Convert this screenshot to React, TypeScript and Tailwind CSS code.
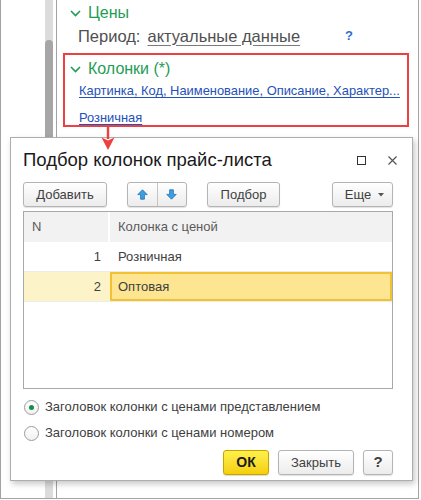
import type { ReactNode } from 'react';

function Chevron() {
  return (
    <svg width="11" height="7" viewBox="0 0 11 7" className="shrink-0">
      <path d="M1 1l4.5 4.5L10 1" fill="none" stroke="#1f9d55" strokeWidth="1.6" />
    </svg>
  );
}

function Btn({ className = '', children }: { className?: string; children: ReactNode }) {
  return (
    <button
      className={`flex h-[25px] shrink-0 items-center justify-center rounded-[3px] border border-[#b4b4b4] bg-linear-to-b from-white to-[#ececec] text-[13px] text-[#404040] shadow-[0_1px_1px_rgba(0,0,0,0.12)] ${className}`}
    >
      {children}
    </button>
  );
}

function BlueArrow({ down = false }: { down?: boolean }) {
  return (
    <svg width="11" height="11" viewBox="0 0 11 11" className={down ? 'rotate-180' : ''}>
      <path
        d="M5.5 0.8L10.2 5.6H7.4V10.2H3.6V5.6H0.8Z"
        fill="#3d9ee0"
        stroke="#1f72b8"
        strokeWidth="0.8"
        strokeLinejoin="round"
      />
    </svg>
  );
}

function Radio({ checked, label }: { checked?: boolean; label: string }) {
  return (
    <div className="flex h-[26px] items-center gap-[6px] pl-[1px]">
      <span className="flex h-[15px] w-[15px] items-center justify-center rounded-full border border-[#9c9c9c] bg-linear-to-b from-white to-[#f1f1f1]">
        {checked && <span className="h-[5px] w-[5px] rounded-full bg-[#12914a]" />}
      </span>
      <span className="text-[13px] text-[#404040]">{label}</span>
    </div>
  );
}

export default function App() {
  return (
    <div className="relative h-[500px] w-[421px] overflow-hidden bg-white font-['Liberation_Sans',Arial,sans-serif]">
      <div className="flex h-[499px] w-[419px] border-x border-b border-[#a3a3a3]">
        {/* left panel with scrollbar */}
        <div className="flex w-[55px] shrink-0 justify-end pr-[3px]">
          <div className="w-[8px] bg-[#dcdcdc]">
            <div className="mt-[40px] h-[260px] rounded-t-[4px] bg-[#a6a6a6]" />
          </div>
        </div>

        <div className="flex-1 border-l border-[#a3a3a3] pl-[6px]">
          <div className="flex h-[26px] items-center gap-[7px] pl-[7px]">
            <Chevron />
            <span className="text-[16px] text-[#1f9d55]">Цены</span>
          </div>
          <div className="flex h-[20px] w-[290px] items-center pl-[15px] text-[16.5px]">
            <span className="text-[#505050]">Период:</span>
            <span className="ml-[7px] text-[#505050] underline decoration-[#7a7a7a] underline-offset-[3px]">
              актуальные данные
            </span>
            <span className="ml-auto text-[13px] font-bold text-[#2f6fd0]">?</span>
          </div>

          <div className="mt-[7px] h-[74px] w-[346px] border-2 border-[#ee4040]">
            <div className="flex h-[28px] items-center gap-[7px] pl-[5px]">
              <Chevron />
              <span className="text-[16px] text-[#1f9d55]">Колонки (*)</span>
            </div>
            <div className="flex h-[16px] items-center whitespace-nowrap pl-[14px] text-[12.9px] text-[#2451b8] underline underline-offset-[2px]">
              Картинка, Код, Наименование, Описание, Характер...
            </div>
            <div className="mt-[11px] flex h-[16px] items-center pl-[14px] text-[12.9px] text-[#2451b8] underline underline-offset-[2px]">
              Розничная
            </div>
          </div>
        </div>
      </div>

      {/* dialog */}
      <div className="absolute left-[10px] top-[137px] flex h-[344px] w-[403px] flex-col border border-[#adadad] bg-white pl-[12px] shadow-[2px_3px_6px_rgba(0,0,0,0.22)]">
        <div className="flex h-[44px] items-center pr-[15px]">
          <span className="text-[18.5px] text-[#1a1a1a]">Подбор колонок прайс-листа</span>
          <span className="ml-auto h-[9px] w-[9px] border-[1.5px] border-[#333]" />
          <svg width="9" height="9" viewBox="0 0 9 9" className="ml-[22px]">
            <path d="M0.5 0.5L8.5 8.5M8.5 0.5L0.5 8.5" stroke="#555" strokeWidth="1.2" />
          </svg>
        </div>

        <div className="flex h-[25px] items-center">
          <Btn className="w-[84px]">Добавить</Btn>
          <div className="ml-[20px] flex h-[25px] w-[60px] rounded-[3px] border border-[#b4b4b4] bg-linear-to-b from-white to-[#ececec] shadow-[0_1px_1px_rgba(0,0,0,0.12)]">
            <span className="flex flex-1 items-center justify-center border-r border-[#c4c4c4]">
              <BlueArrow />
            </span>
            <span className="flex flex-1 items-center justify-center">
              <BlueArrow down />
            </span>
          </div>
          <Btn className="ml-[20px] w-[73px]">Подбор</Btn>
          <Btn className="ml-[52px] w-[61px] gap-[7px] pl-[4px]">
            <span>Еще</span>
            <svg width="6" height="4" viewBox="0 0 6 4">
              <path d="M0 0H6L3 3.5Z" fill="#555" />
            </svg>
          </Btn>
        </div>

        <div className="mt-[4px] h-[178px] w-[370px] border border-[#a9a9a9] text-[13px] text-[#404040]">
          <div className="flex h-[30px] bg-[#f2f2f2] text-[#5a5a5a]">
            <div className="flex w-[86px] items-center border-r-2 border-white pl-[8px]">N</div>
            <div className="flex flex-1 items-center pl-[8px]">Колонка с ценой</div>
          </div>
          <div className="flex h-[30px] border-b border-[#ececec]">
            <div className="flex w-[86px] items-center justify-end pr-[9px]">1</div>
            <div className="flex flex-1 items-center border-l-2 border-transparent pl-[6px]">Розничная</div>
          </div>
          <div className="flex h-[30px] border-b border-[#ececec]">
            <div className="flex w-[86px] items-center justify-end bg-[#fdf3c8] pr-[9px]">2</div>
            <div className="flex flex-1 items-center border-2 border-[#f3c232] bg-[#fde591] pl-[6px]">Оптовая</div>
          </div>
        </div>

        <div className="mt-[5px]">
          <Radio checked label="Заголовок колонки с ценами представлением" />
          <Radio label="Заголовок колонки с ценами номером" />
        </div>

        <div className="mt-[4px] flex justify-end pr-[19px]">
          <button className="flex h-[25px] w-[46px] items-center justify-center rounded-[3px] border border-[#c7a400] bg-linear-to-b from-[#fff04a] to-[#f5cf00] text-[14px] font-bold text-[#1a1a1a] shadow-[0_1px_1px_rgba(0,0,0,0.15)]">
            ОК
          </button>
          <Btn className="ml-[9px] w-[76px]">Закрыть</Btn>
          <Btn className="ml-[9px] w-[30px] text-[15px] font-bold text-[#222]">?</Btn>
        </div>
      </div>

      {/* red pointer arrow */}
      <svg width="16" height="26" viewBox="0 0 16 26" className="absolute left-[100px] top-[126px]">
        <path d="M8 0V13" stroke="#ee4040" strokeWidth="2.4" />
        <path d="M1.5 11.5L8 14.5L14.5 11.5L8 24Z" fill="#ee4040" />
      </svg>
    </div>
  );
}
